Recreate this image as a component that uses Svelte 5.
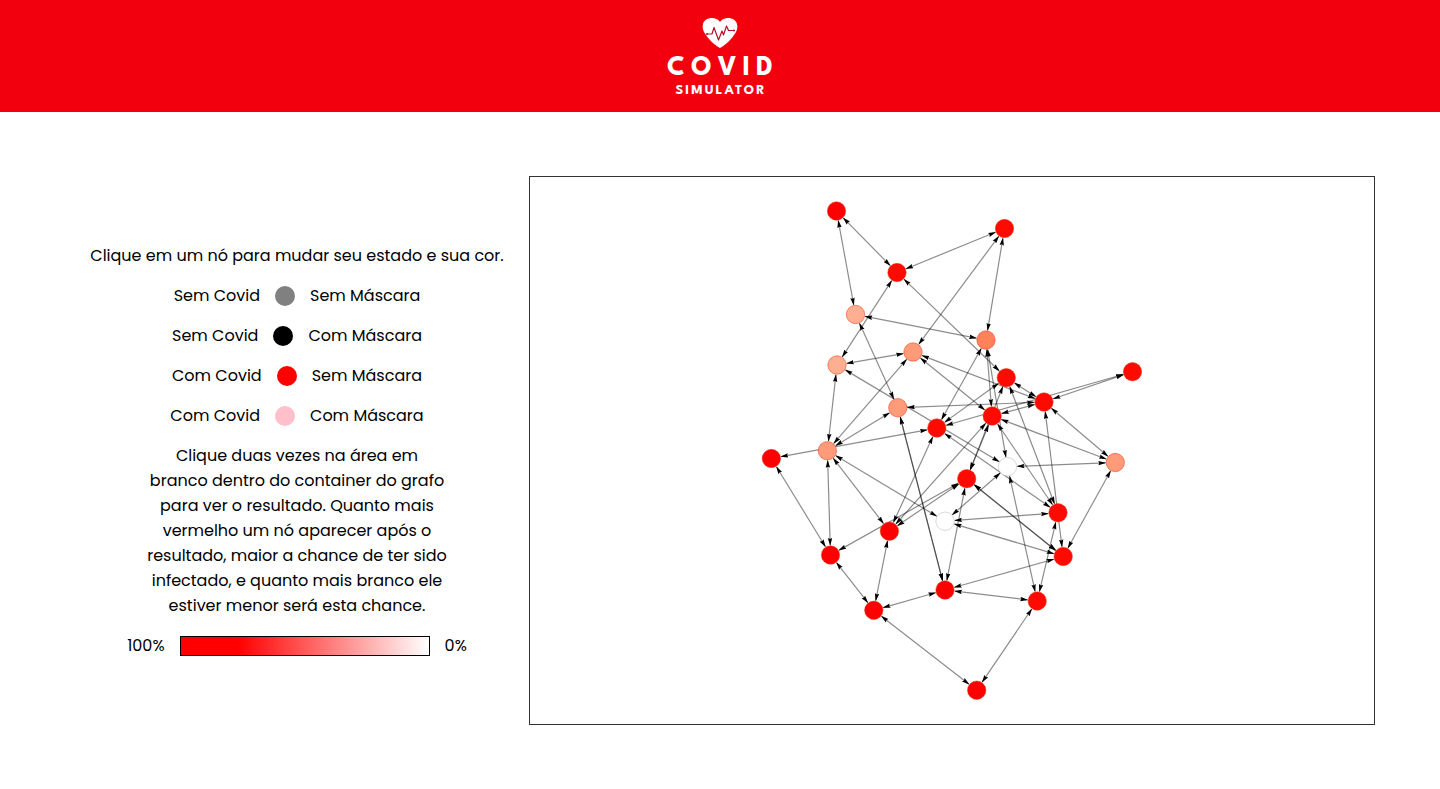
<script>
  // Fill per infection probability, from certain to none
  const nodes = $state([
    { id: 'a', x: 306.5, y: 34, fill: '#ff0000' },
    { id: 'b', x: 474.5, y: 51.5, fill: '#ff0a00' },
    { id: 'c', x: 367, y: 95.5, fill: '#ff0a00' },
    { id: 'd', x: 325.5, y: 137.5, fill: '#ffaf91' },
    { id: 'e', x: 456, y: 163, fill: '#ff825a' },
    { id: 'f', x: 307, y: 188, fill: '#ffaf91' },
    { id: 'g', x: 383, y: 175, fill: '#ff9b78' },
    { id: 'h', x: 476.3, y: 200.7, fill: '#ff0a00' },
    { id: 'i', x: 602.5, y: 194.7, fill: '#ff0a00' },
    { id: 'j', x: 514, y: 225, fill: '#ff0a00' },
    { id: 'k', x: 367.8, y: 230.7, fill: '#ff9b78' },
    { id: 'l', x: 462.2, y: 239, fill: '#ff0a00' },
    { id: 'm', x: 406.8, y: 251, fill: '#ff0a00' },
    { id: 'n', x: 297.4, y: 273.7, fill: '#ff9b78' },
    { id: 'o', x: 241.4, y: 281.5, fill: '#ff0000' },
    { id: 'p', x: 477.5, y: 289.7, fill: '#ffffff' },
    { id: 'q', x: 585.3, y: 285.5, fill: '#ff9b78' },
    { id: 'r', x: 436.7, y: 301.7, fill: '#ff0a00' },
    { id: 's', x: 528, y: 335.8, fill: '#ff0a00' },
    { id: 't', x: 415, y: 344.2, fill: '#ffffff' },
    { id: 'u', x: 359.4, y: 354.2, fill: '#ff0000' },
    { id: 'v', x: 300.5, y: 378, fill: '#ff0000' },
    { id: 'w', x: 533.2, y: 379.5, fill: '#ff0a00' },
    { id: 'x', x: 415, y: 413, fill: '#ff0000' },
    { id: 'y', x: 507.2, y: 424, fill: '#ff0a00' },
    { id: 'z', x: 343.8, y: 433.3, fill: '#ff0000' },
    { id: 'A', x: 446.7, y: 513.2, fill: '#ff0000' }
  ]);

  const links =
    'ad ac cb cf ch bg be de dk fg fn fp gn gl gj em el ep hj hr hs hm lr lu lj ij im kj kn kx kx ' +
    'om nv nu nt jq jw lq ls ms mu pq py pt qw rw rw tw xw sy st rx ru rv xy xz zu zv zA Ay ov';

  const at = Object.fromEntries(nodes.map((n) => [n.id, n]));
  const edges = links.split(' ').map(([from, to]) => {
    const s = at[from];
    const t = at[to];
    const len = Math.hypot(t.x - s.x, t.y - s.y);
    const ux = (t.x - s.x) / len;
    const uy = (t.y - s.y) / len;
    const r = 10;
    return {
      x1: s.x + ux * r,
      y1: s.y + uy * r,
      x2: t.x - ux * r,
      y2: t.y - uy * r
    };
  });

  const states = ['gray', 'black', 'red', 'pink'];
  const legend = [
    { covid: 'Sem Covid', mask: 'Sem Máscara', tone: 'gray' },
    { covid: 'Sem Covid', mask: 'Com Máscara', tone: 'black' },
    { covid: 'Com Covid', mask: 'Sem Máscara', tone: 'red' },
    { covid: 'Com Covid', mask: 'Com Máscara', tone: 'pink' }
  ];

  function cycle(node) {
    node.fill = states[(states.indexOf(node.fill) + 1) % states.length];
  }
</script>

<header>
  <svg class="heart" viewBox="0 0 36 32" width="36" height="32" aria-hidden="true">
    <path
      fill="#fff"
      d="M18 31 C14 29 8 24 4 18 C1 14 0 11 1 7 C2 3 6 1 10 1 C13 1 16 2 18 5 C20 2 23 1 26 1 C30 1 34 3 35 7 C36 11 35 14 32 18 C28 24 22 29 18 31 Z"
    />
    <path
      fill="none"
      stroke="#b3122a"
      stroke-width="1.2"
      stroke-linejoin="round"
      stroke-linecap="round"
      d="M5 17 H10 L12 10.500 L16.500 23 L20 14 L21.500 18 L24.500 9 L26.500 13.500 H32"
    />
    <circle cx="5" cy="17" r="1" fill="#b3122a" />
    <circle cx="32" cy="13.500" r="1" fill="#b3122a" />
  </svg>
  <span class="brand">COVID</span>
  <span class="sub">SIMULATOR</span>
</header>

<main>
  <section class="info">
    <p>Clique em um nó para mudar seu estado e sua cor.</p>
    {#each legend as item}
      <div class="key">
        <span>{item.covid}</span>
        <span class="dot {item.tone}"></span>
        <span>{item.mask}</span>
      </div>
    {/each}
    <p class="help">
      Clique duas vezes na área em branco dentro do container do grafo para ver
      o resultado. Quanto mais vermelho um nó aparecer após o resultado, maior a
      chance de ter sido infectado, e quanto mais branco ele estiver menor será
      esta chance.
    </p>
    <div class="scale">
      <span>100%</span>
      <span class="bar"></span>
      <span>0%</span>
    </div>
  </section>

  <section class="graph">
    <svg viewBox="0 0 844 547">
      <defs>
        <marker id="arrow" markerUnits="userSpaceOnUse" markerWidth="8" markerHeight="5" refX="7" refY="2.5" orient="auto-start-reverse">
          <path d="M0 0.300 L8 2.500 L0 4.700 L1 2.500 Z" fill="#000" />
        </marker>
      </defs>
      {#each edges as e}
        <line x1={e.x1} y1={e.y1} x2={e.x2} y2={e.y2} marker-start="url(#arrow)" marker-end="url(#arrow)" />
      {/each}
      {#each nodes as n (n.id)}
        <circle
          class="node"
          cx={n.x}
          cy={n.y}
          r="9.2"
          fill={n.fill}
          stroke={n.fill === '#ffffff' ? '#b4b4b4' : '#e63214'}
          role="button"
          tabindex="0"
          aria-label="Nó"
          onclick={() => cycle(n)}
          onkeydown={(ev) => ev.key === 'Enter' && cycle(n)}
        />
      {/each}
    </svg>
  </section>
</main>

<style>
  :global(body) {
    margin: 0;
    background: #fff;
  }
  header {
    box-sizing: border-box;
    height: 112px;
    padding-top: 17px;
    background: #f2000d;
    color: #fff;
    display: flex;
    flex-direction: column;
    align-items: center;
    font-family: "League Spartan", Poppins, Lato, sans-serif;
    font-weight: 700;
  }
  .heart {
    display: block;
  }
  .brand {
    margin-top: 5px;
    padding-left: 6px;
    font-size: 28px;
    line-height: 28px;
    letter-spacing: 6px;
  }
  .sub {
    margin-top: 2px;
    padding-left: 2px;
    font-size: 14px;
    line-height: 14px;
    letter-spacing: 2px;
  }
  main {
    box-sizing: border-box;
    min-height: calc(100vh - 112px);
    padding: 64px 65px;
    display: grid;
    grid-template-columns: 464fr 846fr;
    font-family: Poppins, Inter, sans-serif;
    font-size: 16px;
    line-height: 25px;
    color: #000;
  }
  .info {
    display: flex;
    flex-direction: column;
    align-items: center;
    justify-content: center;
    gap: 15px;
    text-align: center;
  }
  p {
    margin: 0;
  }
  .help {
    max-width: 300px;
  }
  .key,
  .scale {
    display: flex;
    align-items: center;
    gap: 15px;
  }
  .dot {
    width: 20px;
    height: 20px;
    border-radius: 50%;
  }
  .gray {
    background: gray;
  }
  .black {
    background: black;
  }
  .red {
    background: red;
  }
  .pink {
    background: pink;
  }
  .bar {
    box-sizing: border-box;
    width: 250px;
    height: 20px;
    border: 1px solid #000;
    background: linear-gradient(to right, #f00 23%, #fff);
  }
  .graph {
    border: 1px solid #333;
    display: flex;
    min-width: 0;
  }
  .graph svg {
    width: 100%;
    display: block;
  }
  line {
    stroke: #000;
    stroke-opacity: 0.45;
    stroke-width: 1.2;
  }
  .node {
    stroke-opacity: 0.5;
    stroke-width: 1;
    cursor: pointer;
  }
</style>
